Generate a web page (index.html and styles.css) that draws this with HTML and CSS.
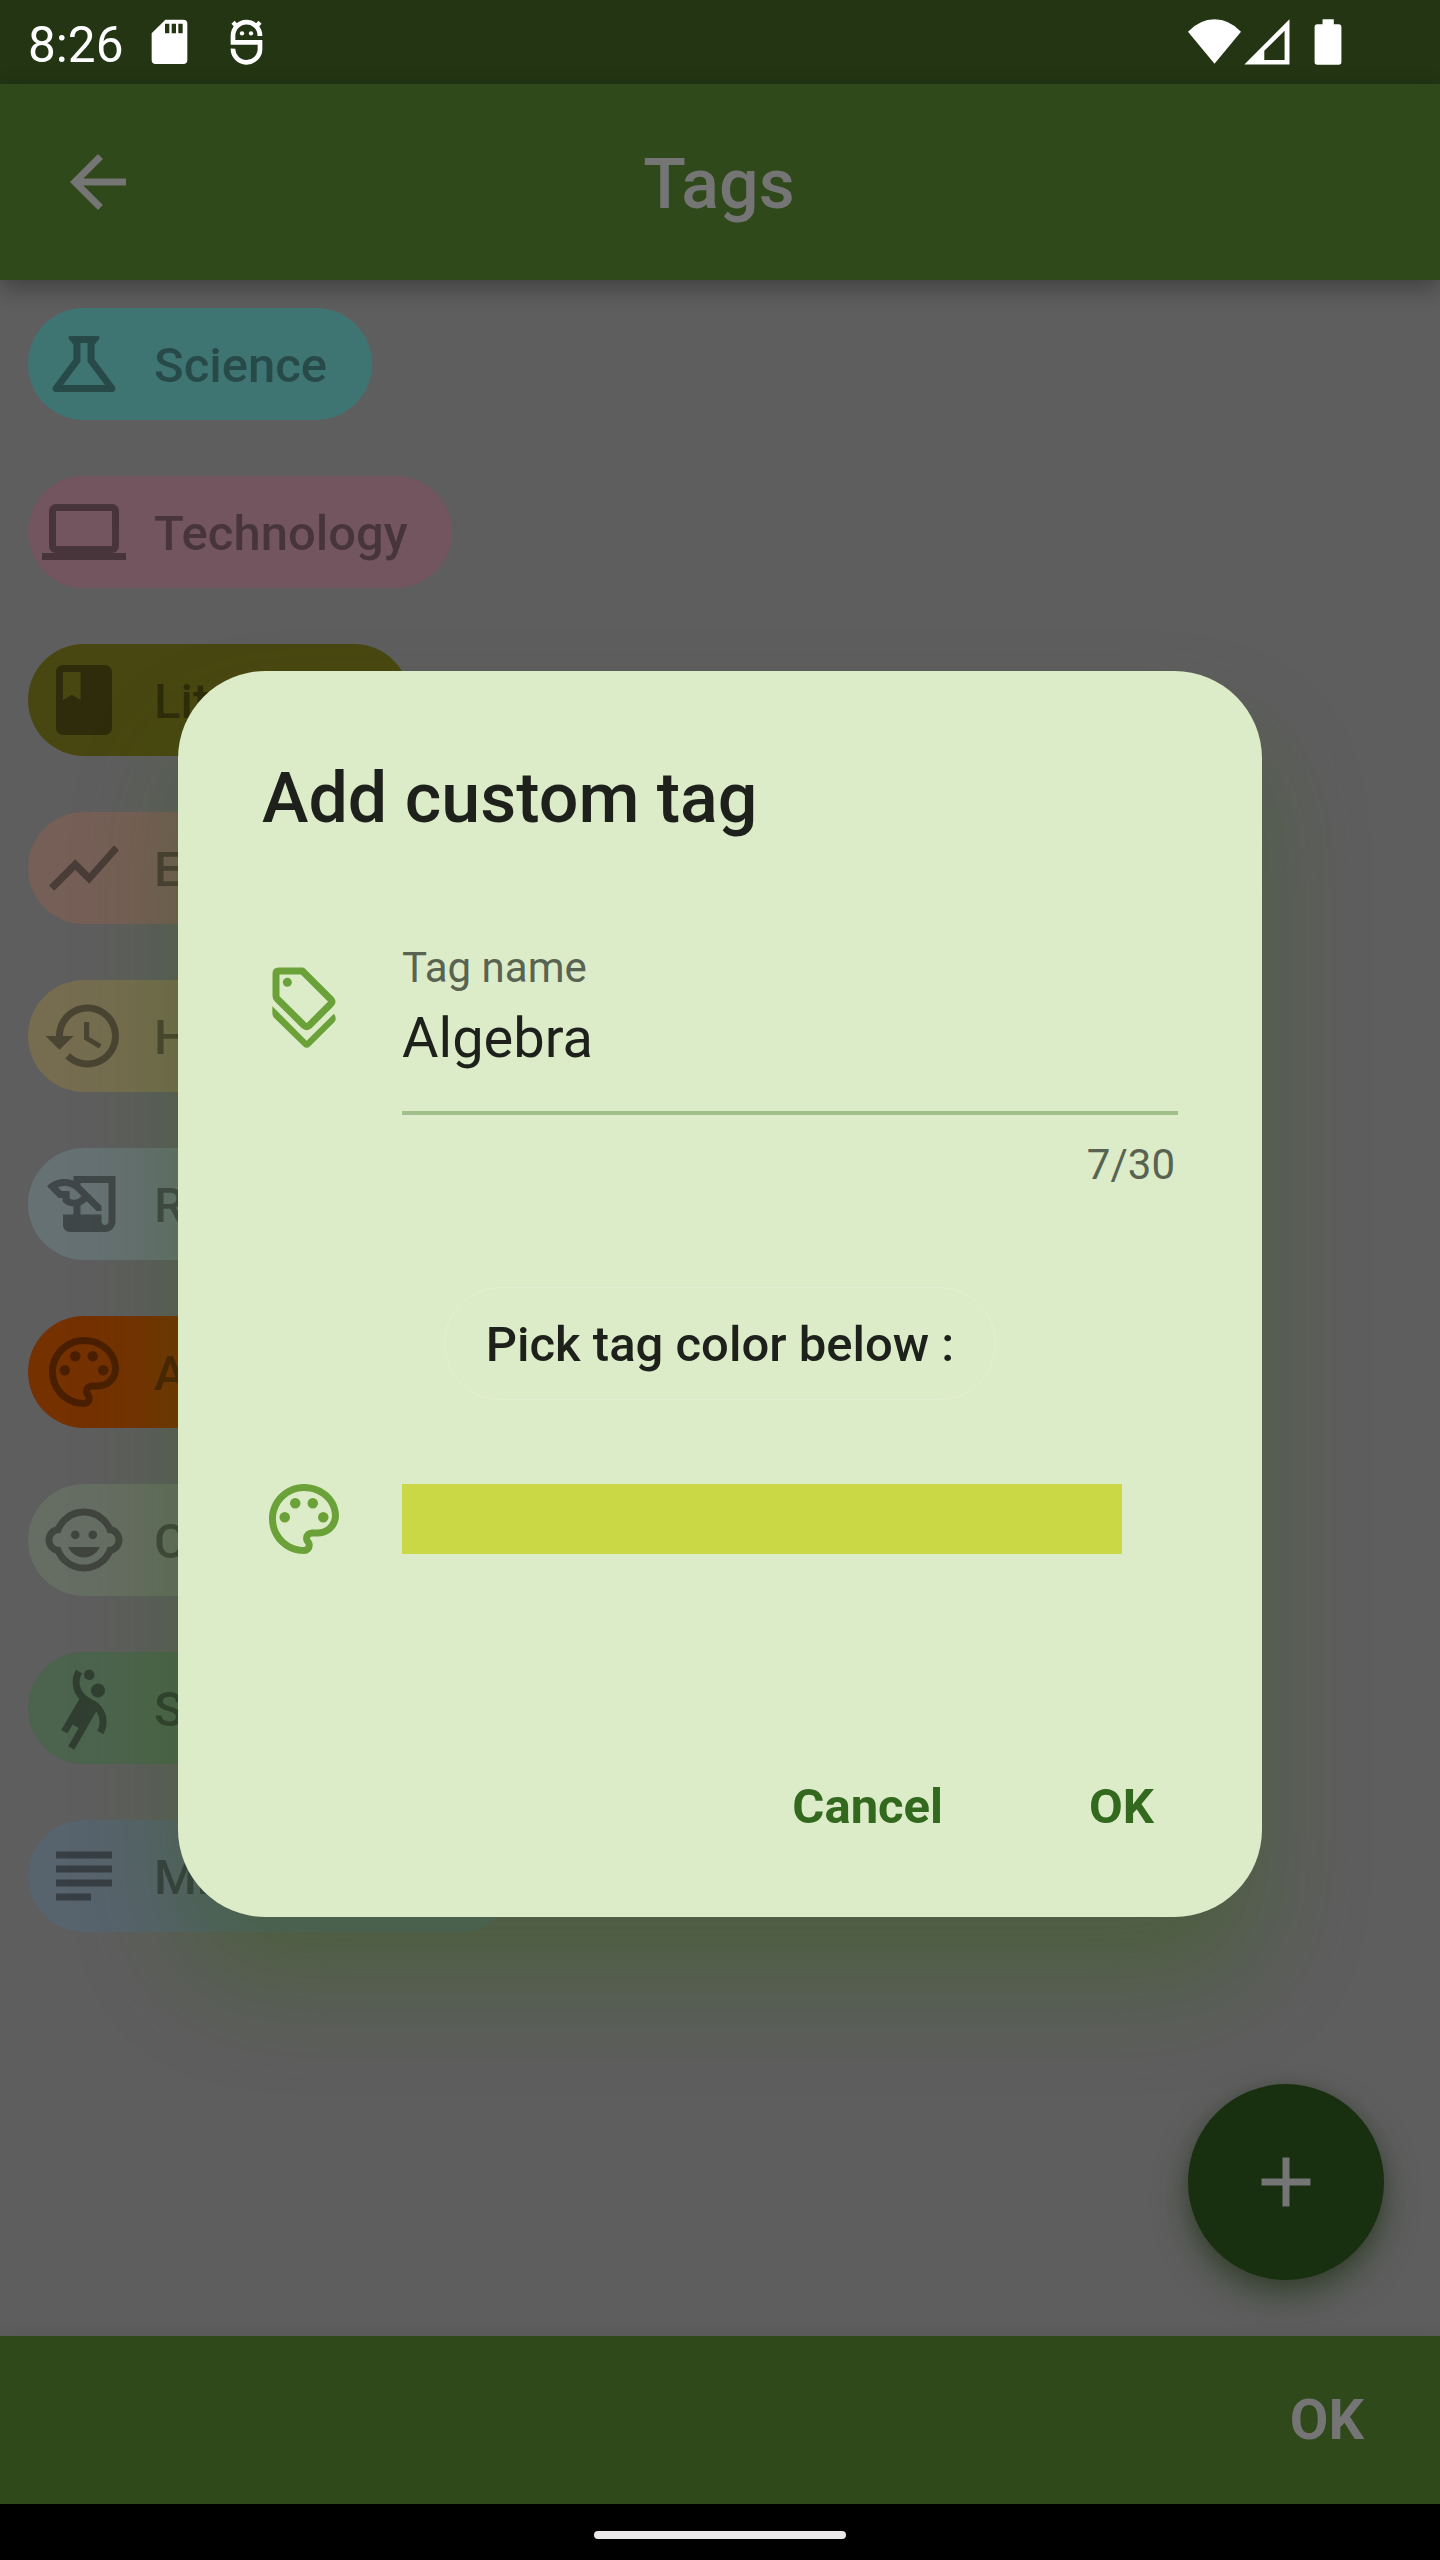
FILE: index.html
```html
<!DOCTYPE html>
<html lang="en">
<head>
<meta charset="utf-8">
<title>Tags</title>
<link rel="stylesheet" href="styles.css">
</head>
<body>
<div class="screen">
  <header class="status">
    <span class="clock">8:26</span>
    <svg class="sd" viewBox="453 59 111 136"><path fill="#fff" fill-rule="evenodd" d="M496 60H550Q562 60 562 72V181Q562 193 550 193H467Q455 193 455 181V101ZM495 72V101H508V72ZM515 72V101H528V72ZM535 72V101H548V72Z"/></svg>
    <svg class="mask" viewBox="690 57 99 138"><g fill="none" stroke="#fff"><path stroke-width="14" d="M699 133V108A40 41 0 0 1 780 108M692 127H780V148A40.500 40 0 0 1 699 146"/><path stroke-width="13" d="M699 67L710 79M780 67L769 79"/></g><path fill="#fff" d="M773 96h13v12h-13z"/><circle cx="726" cy="100" r="6.500" fill="#fff"/><circle cx="753" cy="100" r="6.500" fill="#fff"/></svg>
    <span class="spacer"></span>
    <svg class="wifi" viewBox="564 56 159 135"><path fill="#fff" d="M564 94Q600 57 643.500 57T723 94L643.500 190Z"/></svg>
    <svg class="signal" viewBox="735 57 136 136"><path fill="#fff" fill-rule="evenodd" d="M869.500 58V191.500H736ZM855 92L795 151V178H855Z"/></svg>
    <svg class="battery" viewBox="944 56 83 139"><path fill="#fff" d="M969 57H1003V72H1018Q1026 72 1026 80V186Q1026 194 1018 194H953Q945 194 945 186V80Q945 72 953 72H969Z"/></svg>
  </header>
  <div class="appbar">
    <svg class="icon" viewBox="0 0 24 24"><path d="M20 11H7.830l5.590-5.590L12 4l-8 8 8 8 1.410-1.410L7.830 13H20v-2z"/></svg>
    <h1>Tags</h1>
  </div>
  <main class="tags">
    <div class="chip science"><svg class="icon" viewBox="0 0 24 24"><path fill-rule="evenodd" d="M13 11.330L18 18H6l5-6.670V6h2zM15.960 4H8.040C7.620 4 7.390 4.480 7.650 4.810L9 6.500v4.170L3.200 18.400C2.710 19.060 3.180 20 4 20h16c.82 0 1.290-.94.8-1.600L15 10.670V6.500l1.350-1.690C16.610 4.480 16.380 4 15.960 4z"/></svg><span>Science</span></div>
    <div class="chip technology"><svg class="icon" viewBox="0 0 24 24"><path d="M20 18c1.100 0 1.990-.9 1.990-2L22 6c0-1.100-.9-2-2-2H4c-1.100 0-2 .9-2 2v10c0 1.100.9 2 2 2H0v2h24v-2h-4zM4 6h16v10H4V6z"/></svg><span>Technology</span></div>
    <div class="chip literature"><svg class="icon" viewBox="0 0 24 24"><path d="M18 2H6c-1.100 0-2 .9-2 2v16c0 1.100.9 2 2 2h12c1.100 0 2-.9 2-2V4c0-1.100-.9-2-2-2zM6 4h5v8l-2.500-1.500L6 12V4z"/></svg><span>Literature</span></div>
    <div class="chip economy"><svg class="icon" viewBox="0 0 24 24"><path d="M3.500 18.490l6-6.010 4 4L22 6.920l-1.410-1.410-7.090 7.970-4-4L2 16.990z"/></svg><span>Economy</span></div>
    <div class="chip history"><svg class="icon" viewBox="0 0 24 24"><path d="M13 3c-4.970 0-9 4.030-9 9H1l3.890 3.890.07.14L9 12H6c0-3.870 3.130-7 7-7s7 3.130 7 7-3.130 7-7 7c-1.930 0-3.680-.79-4.940-2.060l-1.420 1.420C8.270 19.990 10.510 21 13 21c4.970 0 9-4.030 9-9s-4.030-9-9-9zm-1 5v5l4.280 2.540.72-1.210-3.500-2.080V8H12z"/></svg><span>History</span></div>
    <div class="chip religion"><svg class="icon" viewBox="0 0 24 24"><path d="M9 4v1.380c-.83-.33-1.720-.5-2.610-.5-1.790 0-3.580.68-4.950 2.050l3.330 3.330h1.110v1.110c.86.86 1.980 1.310 3.110 1.360V15H6v3c0 1.100.9 2 2 2h10c1.660 0 3-1.340 3-3V4H9zm-1.110 6.410V8.260H5.610L4.570 7.220a5.070 5.070 0 0 1 1.820-.34c1.340 0 2.590.52 3.540 1.460l1.410 1.410-.2.200a2.700 2.700 0 0 1-1.920.8c-.47 0-.93-.12-1.330-.34zM19 17c0 .55-.45 1-1 1s-1-.45-1-1v-2h-6v-2.590c.57-.23 1.100-.57 1.560-1.030l.2-.2L15.590 14H17v-1.410l-6-5.970V6h8v11z"/></svg><span>Religion</span></div>
    <div class="chip art"><svg class="icon" viewBox="0 0 24 24"><path d="M12 22C6.490 22 2 17.510 2 12S6.490 2 12 2s10 4.040 10 9c0 3.310-2.690 6-6 6h-1.770c-.28 0-.5.220-.5.500 0 .12.050.23.130.33.410.47.640 1.060.640 1.670A2.500 2.500 0 0 1 12 22zm0-18c-4.410 0-8 3.590-8 8s3.590 8 8 8c.28 0 .5-.22.500-.5a.54.54 0 0 0-.14-.35c-.41-.46-.63-1.050-.63-1.650a2.500 2.500 0 0 1 2.500-2.500H16c2.210 0 4-1.790 4-4 0-3.860-3.590-7-8-7z"/><circle cx="6.500" cy="11.500" r="1.500"/><circle cx="9.500" cy="7.500" r="1.500"/><circle cx="14.500" cy="7.500" r="1.500"/><circle cx="17.500" cy="11.500" r="1.500"/></svg><span>Art</span></div>
    <div class="chip children"><svg class="icon" viewBox="0 0 24 24"><circle cx="14.500" cy="10.500" r="1.250"/><circle cx="9.500" cy="10.500" r="1.250"/><path d="M22.940 12.660c.04-.21.060-.43.060-.66s-.02-.45-.06-.66c-.25-1.510-1.360-2.740-2.810-3.170-.53-1.120-1.280-2.100-2.190-2.910C16.360 3.850 14.280 3 12 3s-4.360.85-5.940 2.260c-.92.81-1.670 1.800-2.190 2.910-1.450.43-2.560 1.650-2.810 3.170-.04.21-.06.43-.06.66s.02.45.060.66c.25 1.510 1.360 2.740 2.810 3.170.52 1.110 1.270 2.090 2.170 2.890C7.620 20.140 9.710 21 12 21s4.380-.86 5.970-2.280c.9-.8 1.650-1.790 2.170-2.890 1.440-.43 2.550-1.650 2.800-3.170zM19 14c-.1 0-.19-.02-.29-.03-.2.670-.49 1.290-.86 1.860C16.600 17.740 14.450 19 12 19s-4.600-1.260-5.850-3.170c-.37-.57-.66-1.190-.86-1.860-.1.010-.19.030-.29.030-1.100 0-2-.9-2-2s.9-2 2-2c.1 0 .19.020.290.030.2-.67.490-1.290.860-1.860C7.400 6.260 9.550 5 12 5s4.600 1.260 5.850 3.170c.37.570.66 1.190.86 1.860.1-.01.190-.03.290-.03 1.100 0 2 .9 2 2s-.9 2-2 2zM7.500 14c.76 1.770 2.490 3 4.500 3s3.740-1.230 4.500-3h-9z"/></svg><span>Children</span></div>
    <div class="chip sport"><svg class="icon" viewBox="0 0 24 24"><path d="M14.270 6c-.55.95-.22 2.180.73 2.730.95.55 2.180.22 2.730-.73.55-.95.22-2.180-.73-2.730-.95-.55-2.180-.22-2.730.73zM15.840 10.410s-1.630-.94-2.600-1.500c-2.380-1.380-3.200-4.440-1.820-6.820l-1.730-1C8.100 3.830 8.600 7.210 10.660 9.400l-5.150 8.920 1.730 1 1.500-2.600 1.730 1-3 5.200 1.730 1 6.290-10.890c1.140 1.550 1.330 3.690.31 5.460l1.730 1c1.600-2.750 1.280-6.580-1.690-9.080zM12.750 3.800c.72.41 1.630.17 2.050-.55.41-.72.17-1.630-.55-2.050-.72-.41-1.630-.17-2.050.55-.41.720-.17 1.640.55 2.050z"/></svg><span>Sport</span></div>
    <div class="chip misc"><svg class="icon" viewBox="0 0 24 24"><path d="M14 17H4v2h10v-2zm6-8H4v2h16V9zM4 15h16v-2H4v2zM4 5v2h16V5H4z"/></svg><span>Miscellaneous</span></div>
    <div class="fab"><svg class="icon" viewBox="0 0 24 24"><path d="M19 13h-6v6h-2v-6H5v-2h6V5h2v6h6v2z"/></svg></div>
  </main>
  <footer class="bottombar">OK</footer>
  <div class="navbar"><span class="handle"></span></div>

  <div class="overlay">
    <section class="dialog">
      <h2>Add custom tag</h2>
      <div class="row name-row">
        <svg class="icon" viewBox="786 77 252 252"><path fill="none" stroke="currentColor" stroke-width="21" stroke-linejoin="round" d="M828 100Q828 92 836 92H907L992 177Q999 184 992 191L927 256Q920 262 913 256L832 176Q828 172 828 167Z"/><circle cx="862" cy="126" r="13.500"/><path d="M817 198L920 301L1002 220Q1011 234 1004 244L930 318Q920 327 910 318L823 233Q817 227 817 219Z"/></svg>
        <div class="field">
          <div class="label">Tag name</div>
          <div class="value">Algebra</div>
          <div class="counter">7/30</div>
        </div>
      </div>
      <div class="hint">Pick tag color below :</div>
      <div class="row color-row">
        <svg class="icon" viewBox="0 0 24 24"><path d="M12 22C6.490 22 2 17.510 2 12S6.490 2 12 2s10 4.040 10 9c0 3.310-2.690 6-6 6h-1.770c-.28 0-.5.220-.5.500 0 .12.050.23.130.33.410.47.640 1.060.640 1.670A2.500 2.500 0 0 1 12 22zm0-18c-4.410 0-8 3.590-8 8s3.590 8 8 8c.28 0 .5-.22.500-.5a.54.54 0 0 0-.14-.35c-.41-.46-.63-1.050-.63-1.650a2.500 2.500 0 0 1 2.500-2.500H16c2.210 0 4-1.790 4-4 0-3.860-3.590-7-8-7z"/><circle cx="6.500" cy="11.500" r="1.500"/><circle cx="9.500" cy="7.500" r="1.500"/><circle cx="14.500" cy="7.500" r="1.500"/><circle cx="17.500" cy="11.500" r="1.500"/></svg>
        <div class="swatch"></div>
      </div>
      <div class="actions"><span>Cancel</span><span>OK</span></div>
    </section>
  </div>
</div>
</body>
</html>
```
FILE: styles.css
```css
* { box-sizing: border-box; }
body { margin: 0; font-family: Roboto, sans-serif; }
h1, h2 { margin: 0; font-weight: 500; }
.screen {
  position: relative;
  width: 1440px;
  height: 2560px;
  display: flex;
  flex-direction: column;
  background: #5e5e5e;
  overflow: hidden;
}
.icon { display: block; width: 84px; height: 84px; flex: none; fill: currentColor; }

.status {
  height: 84px;
  display: flex;
  align-items: flex-start;
  padding: 19px 98px 0 28px;
  background: #233513;
  color: #fff;
}
.clock { width: 123px; font-size: 49.5px; line-height: 52px; }
.sd { width: 37px; height: 46px; }
.mask { width: 33px; height: 46px; margin-left: 42px; }
.spacer { flex: 1; }
.wifi { width: 53px; height: 45px; }
.signal { width: 46px; height: 46px; margin-left: 3px; }
.battery { width: 28px; height: 46px; margin-left: 24px; }

.appbar {
  position: relative;
  height: 196px;
  display: grid;
  grid-template-columns: 84px 1fr 84px;
  align-items: center;
  padding: 0 56px;
  background: #2f491b;
  color: #757575;
  box-shadow: 0 8px 22px rgba(0, 0, 0, .32);
}
.appbar h1 { padding: 4px 2px 0 0; font-size: 70px; line-height: 84px; text-align: center; }

.tags {
  position: relative;
  flex: 1;
  display: flex;
  flex-direction: column;
  align-items: flex-start;
  gap: 56px;
  padding: 28px;
}
.chip {
  height: 112px;
  display: flex;
  align-items: center;
  gap: 28px;
  padding: 0 44.5px 0 14px;
  border-radius: 56px;
  color: rgba(0, 0, 0, .37);
  font-size: 49px;
  font-weight: 500;
  white-space: nowrap;
}
.chip span { padding-top: 2px; }
.science { background: #3e7573; }
.technology { background: #73555f; }
.literature { background: #494711; }
.economy { background: #765f57; }
.history { background: #766d50; }
.religion { background: #667173; }
.art { background: #763100; }
.children { background: #666e63; }
.sport { background: #4c644e; }
.misc { background: #57636d; }

.fab {
  position: absolute;
  right: 56px;
  bottom: 56px;
  width: 196px;
  height: 196px;
  display: grid;
  place-items: center;
  border-radius: 50%;
  background: #18300f;
  color: #757575;
  box-shadow: 0 16px 32px rgba(28, 50, 16, .55), 0 2px 14px rgba(40, 40, 40, .25);
}

.bottombar {
  position: relative;
  height: 168px;
  display: flex;
  align-items: center;
  justify-content: flex-end;
  padding-right: 76px;
  background: #2f491b;
  color: #757575;
  font-size: 56px;
  font-weight: 700;
  box-shadow: 0 -2px 14px rgba(0, 0, 0, .08);
}
.navbar { position: relative; height: 56px; display: flex; justify-content: center; padding-top: 27px; background: #000; }
.handle { width: 252px; height: 8px; border-radius: 4px; background: #ece9ea; }

.overlay {
  position: absolute;
  inset: 84px 0 56px;
  display: grid;
  place-items: center;
}
.dialog {
  width: 1084px;
  height: 1246px;
  display: flex;
  flex-direction: column;
  padding: 85px 84px 0;
  border-radius: 87.5px;
  background: #ddecc8;
  color: #1e211b;
  box-shadow: 0 68px 100px rgba(50, 96, 16, .37);
}
.dialog h2 { font-size: 70px; line-height: 84px; }
.row { display: flex; gap: 56px; }
.row .icon { color: #6aa138; }
.name-row { margin-top: 102px; }
.name-row .icon { margin-top: 24px; }
.field { flex: 1; }
.label { padding-top: 1px; font-size: 42px; line-height: 50px; color: #586351; }
.value { margin-top: 12px; height: 110px; font-size: 56px; line-height: 66px; border-bottom: 4px solid #a1c08c; }
.counter { margin-top: 25px; padding-right: 3px; font-size: 42px; line-height: 50px; text-align: right; color: #586351; }
.hint {
  align-self: center;
  width: 552px;
  height: 113px;
  margin-top: 97px;
  border: 1px solid #e3efd2;
  border-radius: 56.500px;
  font-size: 49px;
  font-weight: 500;
  line-height: 113px;
  text-align: center;
  white-space: nowrap;
}
.color-row { margin-top: 77px; align-items: center; }
.swatch { width: 720px; height: 70px; background: #c9d844; }
.actions {
  display: flex;
  justify-content: flex-end;
  gap: 146px;
  margin-top: 218px;
  padding-right: 24px;
  color: #33691e;
  font-size: 49px;
  font-weight: 700;
  line-height: 56px;
}
```
